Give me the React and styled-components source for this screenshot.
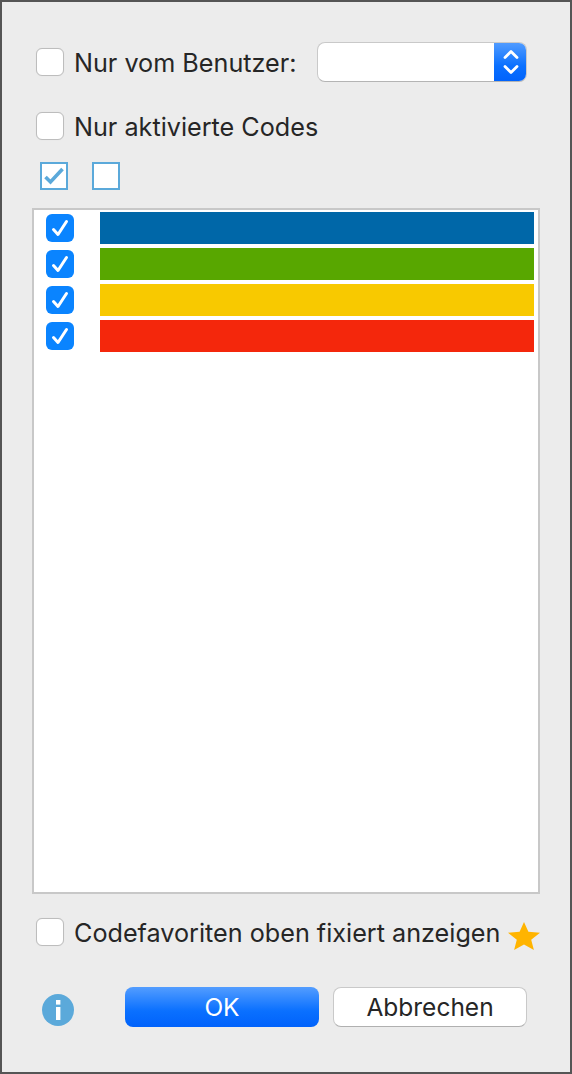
import React from "react";
import styled, { createGlobalStyle } from "styled-components";

const GlobalStyle = createGlobalStyle`
  html, body {
    margin: 0;
    padding: 0;
  }
  * {
    box-sizing: border-box;
  }
`;

const Dialog = styled.div`
  width: 572px;
  height: 1074px;
  background: #ececec;
  border: 2px solid #555555;
  padding: 40px 30px 0 30px;
  display: flex;
  flex-direction: column;
  font-family: Inter, "Liberation Sans", sans-serif;
  color: #262626;
`;

const OptionRow = styled.div`
  display: flex;
  align-items: center;
  height: ${(p) => p.$height}px;
  margin-left: 4px;
  margin-bottom: ${(p) => p.$gap || 0}px;
`;

const Box = styled.span`
  width: 28px;
  height: 28px;
  flex: none;
  background: #ffffff;
  border: 1px solid #bdbdbd;
  border-radius: 6px;
  box-shadow: 0 0 1px rgba(0, 0, 0, 0.1);
`;

const Label = styled.span`
  margin-left: 10px;
  padding-top: 2px;
  font-size: 25.2px;
  line-height: 38px;
  white-space: nowrap;
`;

const Select = styled.div`
  width: 210px;
  height: 40px;
  margin-left: auto;
  margin-right: 13px;
  display: flex;
  justify-content: flex-end;
  background: #ffffff;
  border-radius: 8px;
  border: 1px solid #c9c9c9;
  border-bottom-color: #b4b4b4;
  overflow: hidden;
`;

const SelectArrows = styled.div`
  width: 33px;
  margin: -1px -1px -1px 0;
  display: flex;
  align-items: center;
  justify-content: center;
  background: linear-gradient(#539dff, #0a70ff 60%, #0062fb);
`;

const ToggleRow = styled.div`
  display: flex;
  gap: 24px;
  margin: 22px 0 18px 8px;
`;

const ToggleBox = styled.span`
  width: 28px;
  height: 28px;
  display: flex;
  align-items: center;
  justify-content: center;
  background: #ffffff;
  border: 2px solid #5ba9da;
`;

const CodeList = styled.div`
  width: 508px;
  height: 686px;
  background: #ffffff;
  border: 2px solid #c8c8c8;
  padding: 2px 4px 0 12px;
  display: flex;
  flex-direction: column;
  gap: 4px;
`;

const CodeRow = styled.div`
  display: flex;
  align-items: center;
  gap: 26px;
  height: 32px;
`;

const CodeCheck = styled.span`
  width: 28px;
  height: 28px;
  flex: none;
  display: flex;
  align-items: center;
  justify-content: center;
  background: #0a84ff;
  border-radius: 6px;
`;

const ColorBar = styled.div`
  flex: 1;
  height: 32px;
  background: ${(p) => p.$color};
`;

const FavoriteRow = styled.div`
  display: flex;
  align-items: center;
  justify-content: space-between;
  height: 40px;
  margin-top: 18px;
`;

const FavoriteOption = styled.div`
  display: flex;
  align-items: center;
  margin-left: 4px;
`;

const Star = styled.svg`
  width: 32px;
  height: 28px;
  margin-top: 8px;
  display: block;
`;

const ButtonRow = styled.div`
  display: flex;
  align-items: center;
  margin-top: 35px;
`;

const InfoIcon = styled.svg`
  width: 32px;
  height: 32px;
  margin: 6px 51px 0 10px;
  display: block;
`;

const Button = styled.div`
  width: 194px;
  height: 40px;
  display: flex;
  align-items: center;
  justify-content: center;
  font-size: 24.5px;
  border-radius: 8px;
  color: ${(p) => (p.$primary ? "#ffffff" : "#262626")};
  background: ${(p) => (p.$primary ? "linear-gradient(#539dff, #0a70ff 60%, #0062fb)" : "#ffffff")};
  border: ${(p) => (p.$primary ? "none" : "1px solid #c9c9c9")};
  border-bottom: ${(p) => (p.$primary ? "none" : "1px solid #b0b0b0")};
  margin-left: ${(p) => p.$gap || 0}px;
`;

const codes = ["#0067a8", "#58a700", "#f8c900", "#f4270c"];

const WhiteCheck = () => (
  <svg width="28" height="28" viewBox="0 0 28 28" fill="none">
    <path d="M7.5 15.5 L12 20.5 L20.5 7.5" stroke="#ffffff" strokeWidth="3" strokeLinecap="round" strokeLinejoin="round" />
  </svg>
);

const BlueCheck = () => (
  <svg width="24" height="24" viewBox="0 0 24 24" fill="none">
    <path d="M3.5 13 L8.5 18 L20.5 5" stroke="#5ba9da" strokeWidth="3.6" />
  </svg>
);

export default function App() {
  return (
    <Dialog>
      <GlobalStyle />
      <OptionRow $height={40} $gap={30}>
        <Box />
        <Label>Nur vom Benutzer:</Label>
        <Select>
          <SelectArrows>
            <svg width="20" height="30" viewBox="0 0 20 30" fill="none">
              <path d="M4 10.5 L10 4.5 L16 10.5" stroke="#ffffff" strokeWidth="2.8" strokeLinecap="round" strokeLinejoin="round" />
              <path d="M4 19.5 L10 25.5 L16 19.5" stroke="#ffffff" strokeWidth="2.8" strokeLinecap="round" strokeLinejoin="round" />
            </svg>
          </SelectArrows>
        </Select>
      </OptionRow>
      <OptionRow $height={28}>
        <Box />
        <Label>Nur aktivierte Codes</Label>
      </OptionRow>
      <ToggleRow>
        <ToggleBox>
          <BlueCheck />
        </ToggleBox>
        <ToggleBox />
      </ToggleRow>
      <CodeList>
        {codes.map((color) => (
          <CodeRow key={color}>
            <CodeCheck>
              <WhiteCheck />
            </CodeCheck>
            <ColorBar $color={color} />
          </CodeRow>
        ))}
      </CodeList>
      <FavoriteRow>
        <FavoriteOption>
          <Box />
          <Label>Codefavoriten oben fixiert anzeigen</Label>
        </FavoriteOption>
        <Star viewBox="0 0 32 28">
          <path d="M16 0 L20.4 9.8 L32 10.7 L23.2 17.7 L25.9 28 L16 22.6 L6.1 28 L8.8 17.7 L0 10.7 L11.6 9.8 Z" fill="#ffb400" />
        </Star>
      </FavoriteRow>
      <ButtonRow>
        <InfoIcon viewBox="0 0 32 32">
          <circle cx="16" cy="16" r="16" fill="#5ba9da" />
          <rect x="14" y="13" width="4.4" height="13" fill="#ffffff" />
          <rect x="14" y="6" width="4.4" height="4.6" fill="#ffffff" />
        </InfoIcon>
        <Button $primary>OK</Button>
        <Button $gap={14}>Abbrechen</Button>
      </ButtonRow>
    </Dialog>
  );
}
